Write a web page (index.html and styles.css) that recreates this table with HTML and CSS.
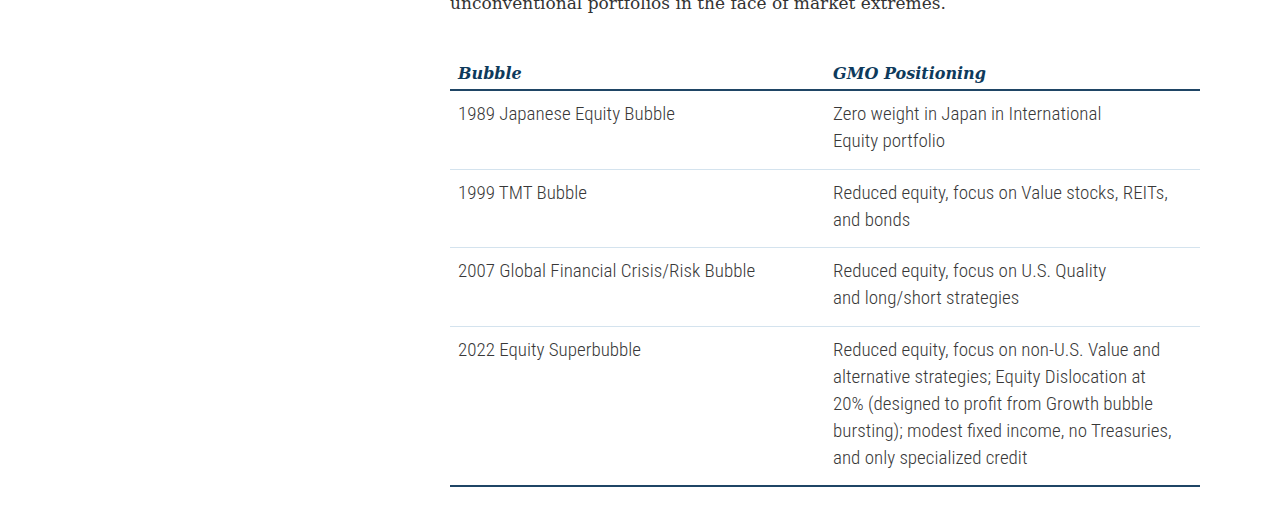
FILE: index.html
```html
<!DOCTYPE html>
<html>
<head>
<meta charset="utf-8">
<link rel="stylesheet" href="styles.css">
</head>
<body>
<main class="content">
  <p class="intro">unconventional portfolios in the face of market extremes.</p>
  <table class="bubbles">
    <thead>
      <tr><th>Bubble</th><th>GMO Positioning</th></tr>
    </thead>
    <tbody>
      <tr><td>1989 Japanese Equity Bubble</td><td>Zero weight in Japan in International<br>Equity portfolio</td></tr>
      <tr><td>1999 TMT Bubble</td><td>Reduced equity, focus on Value stocks, REITs,<br>and bonds</td></tr>
      <tr><td>2007 Global Financial Crisis/Risk Bubble</td><td>Reduced equity, focus on U.S. Quality<br>and long/short strategies</td></tr>
      <tr><td>2022 Equity Superbubble</td><td>Reduced equity, focus on non-U.S. Value and<br>alternative strategies; Equity Dislocation at<br>20% (designed to profit from Growth bubble<br>bursting); modest fixed income, no Treasuries,<br>and only specialized credit</td></tr>
    </tbody>
  </table>
</main>
</body>
</html>
```
FILE: styles.css
```css
html, body { margin: 0; padding: 0; background: #fff; }
.content { width: 750px; margin-left: 450px; }
.intro {
  margin: -11px 0 0 0;
  font-family: "DejaVu Serif", serif;
  font-size: 17px;
  line-height: 28px;
  color: #333;
}
.bubbles {
  width: 750px;
  margin-top: 43px;
  border-collapse: collapse;
  table-layout: fixed;
}
.bubbles th {
  text-align: left;
  font-family: "DejaVu Serif", serif;
  font-style: italic;
  font-weight: bold;
  font-size: 16px;
  color: #0e3a5c;
  padding: 0 8px 1px;
  line-height: 28px;
  border-bottom: 2px solid #1f4565;
}
.bubbles td {
  vertical-align: top;
  font-family: "Roboto", sans-serif;
  font-stretch: 75%;
  font-weight: 300;
  font-size: 19px;
  line-height: 27px;
  color: #383838;
  padding: 9px 8px 14.5px;
  border-bottom: 1px solid #d4e3ee;
}
.bubbles tbody tr:last-child td { border-bottom: 2px solid #1f4565; }
```
